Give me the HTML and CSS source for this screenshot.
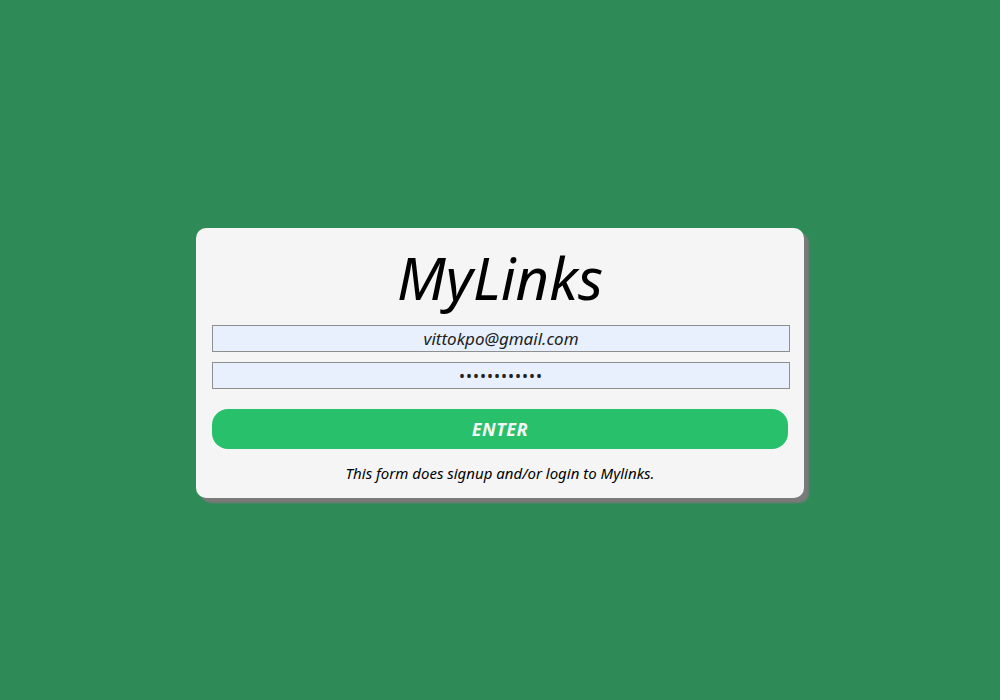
FILE: index.html
```html
<!DOCTYPE html>
<html>
<head>
<meta charset="utf-8">
<link rel="stylesheet" href="styles.css">
</head>
<body>
<div class="page">
  <form class="card">
    <h1 class="title">MyLinks</h1>
    <input class="field" type="text" value="vittokpo@gmail.com">
    <input class="field" type="password" value="abcdefghijkl">
    <button class="enter" type="button">ENTER</button>
    <p class="note">This form does signup and/or login to Mylinks.</p>
  </form>
</div>
</body>
</html>
```
FILE: styles.css
```css
html, body {
  margin: 0;
  padding: 0;
  background: #2e8b57;
  font-family: "Noto Sans", "Open Sans", sans-serif;
}
.page {
  box-sizing: border-box;
  min-height: 700px;
  padding-top: 26px;
  display: flex;
  align-items: center;
  justify-content: center;
}
.card {
  width: 576px;
  padding: 16px 16px 16px;
  background: #f5f5f5;
  border-radius: 10px;
  box-shadow: 5px 5px 2px #7a7a7a;
  display: flex;
  flex-direction: column;
  align-items: stretch;
}
.title {
  margin: 0 0 0;
  height: 81px;
  line-height: 68px;
  text-align: center;
  font-size: 58px;
  font-weight: 400;
  font-style: italic;
  color: #000;
}
.field {
  box-sizing: border-box;
  width: calc(100% + 2px);
  height: 27px;
  margin: 0 0 10px;
  padding: 0 4px;
  border: 1px solid #8f8f8f;
  background: #e8f0fe;
  font-family: inherit;
  font-size: 17px;
  font-style: italic;
  color: #222;
  text-align: center;
  outline: none;
}
.field[type="password"] {
  font-style: normal;
  font-size: 16px;
  letter-spacing: 1px;
}
.enter {
  margin-top: 10px;
  height: 40px;
  border: none;
  border-radius: 16px;
  background: #28c06a;
  color: #f5f5f5;
  font-family: inherit;
  font-size: 18px;
  font-weight: 700;
  font-style: italic;
  letter-spacing: 0.5px;
}
.note {
  margin: 15px 0 0;
  text-align: center;
  font-size: 15px;
  font-style: italic;
  color: #000;
  line-height: 18px;
}
```
